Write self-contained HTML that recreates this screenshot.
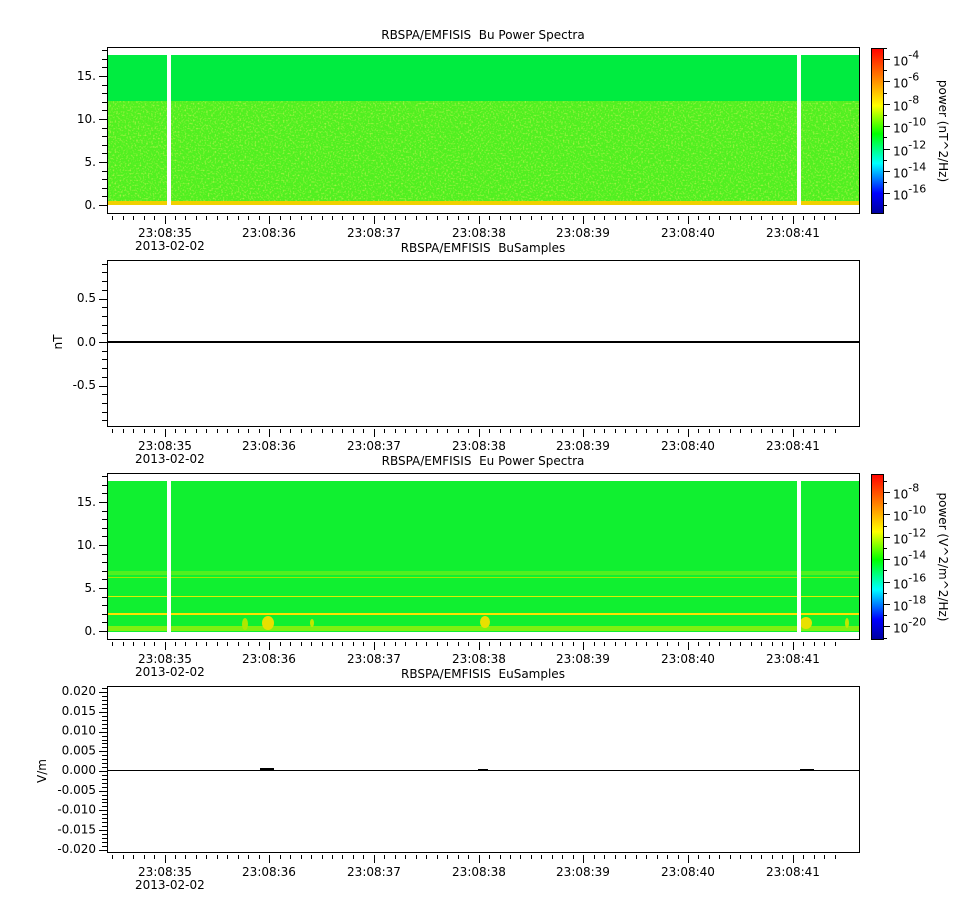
<!DOCTYPE html>
<html><head><meta charset="utf-8"><style>
html,body{margin:0;padding:0;background:#fff;}
svg{display:block;font-family:"DejaVu Sans","Liberation Sans",sans-serif;}
</style></head><body>
<svg id="s" width="967" height="900" viewBox="0 0 967 900" xmlns="http://www.w3.org/2000/svg">
<defs>
<linearGradient id="cb" x1="0" y1="1" x2="0" y2="0">
<stop offset="0" stop-color="#0000a0"/><stop offset="0.12" stop-color="#0000ff"/>
<stop offset="0.3" stop-color="#00ffff"/><stop offset="0.48" stop-color="#00ff00"/>
<stop offset="0.65" stop-color="#ffff00"/><stop offset="0.82" stop-color="#ff8000"/>
<stop offset="1" stop-color="#ff0000"/></linearGradient>
<filter id="nz" x="0" y="0" width="1" height="1">
<feTurbulence type="fractalNoise" baseFrequency="0.6" numOctaves="1" seed="3"/>
<feColorMatrix type="matrix" values="0 0 0 0 0.6  0 0 0 0 0.9  0 0 0 0 0.1  0 0 0 3 -1.5"/>
</filter>
</defs>
<rect x="108" y="55" width="752" height="47" fill="#00ec40"/>
<rect x="108" y="101" width="752" height="103" fill="#50f020"/>
<rect x="108" y="101" width="752" height="103" filter="url(#nz)" opacity="0.8"/>
<rect x="108" y="201" width="752" height="4" fill="#f0d000"/>
<rect x="167" y="55" width="4" height="151" fill="#fff"/>
<rect x="797" y="55" width="4" height="151" fill="#fff"/>
<rect x="108" y="481" width="752" height="151" fill="#10f030"/>
<rect x="108" y="571" width="752" height="4" fill="#50f020"/>
<rect x="108" y="577" width="752" height="1" fill="#a0e800"/>
<rect x="108" y="596" width="752" height="1" fill="#e0f000"/>
<rect x="108" y="613" width="752" height="2" fill="#ffe000"/>
<rect x="108" y="626" width="752" height="5" fill="#80f010"/>
<ellipse cx="268" cy="623" rx="6" ry="7" fill="#e8e000"/>
<ellipse cx="245" cy="624" rx="3" ry="6" fill="#b0e800"/>
<ellipse cx="312" cy="623" rx="2" ry="4" fill="#c0e800"/>
<ellipse cx="485" cy="622" rx="5" ry="6" fill="#e8e000"/>
<ellipse cx="806" cy="623" rx="6" ry="6" fill="#e8e000"/>
<ellipse cx="847" cy="623" rx="2" ry="5" fill="#c0e800"/>
<rect x="167" y="481" width="4" height="151" fill="#fff"/>
<rect x="797" y="481" width="4" height="151" fill="#fff"/>
<rect x="108" y="341" width="752" height="2" fill="#000"/>
<rect x="108" y="770" width="752" height="1" fill="#000"/>
<rect x="260" y="768" width="14" height="3" fill="#000"/>
<rect x="478" y="769" width="10" height="2" fill="#000"/>
<rect x="800" y="769" width="14" height="2" fill="#000"/>
<rect x="871" y="48" width="12" height="165" fill="url(#cb)"/>
<rect x="871" y="474" width="12" height="165" fill="url(#cb)"/>
<g id="g" fill="none" stroke="#000" stroke-width="1"></g>
<g id="t" font-size="12" fill="#000"></g>
</svg>
<script>
var g=document.getElementById('g'),t=document.getElementById('t');
function L(x1,y1,x2,y2){var l=document.createElementNS('http://www.w3.org/2000/svg','line');l.setAttribute('x1',x1);l.setAttribute('y1',y1);l.setAttribute('x2',x2);l.setAttribute('y2',y2);g.appendChild(l);}
function T(x,y,s,a,sz){var e=document.createElementNS('http://www.w3.org/2000/svg','text');e.setAttribute('x',x);e.setAttribute('y',y);e.setAttribute('text-anchor',a||'start');if(sz)e.setAttribute('font-size',sz);e.innerHTML=s;t.appendChild(e);return e;}
var tops=[47,260,473,686],titles=['RBSPA/EMFISIS&#160; Bu Power Spectra','RBSPA/EMFISIS&#160; BuSamples','RBSPA/EMFISIS&#160; Eu Power Spectra','RBSPA/EMFISIS&#160; EuSamples'];
var times=['23:08:35','23:08:36','23:08:37','23:08:38','23:08:39','23:08:40','23:08:41'];
var X0=164.5,DX=104.7;
tops.forEach(function(y0,i){
 var y1=y0+166;
 var r=document.createElementNS('http://www.w3.org/2000/svg','rect');r.setAttribute('x',107.5);r.setAttribute('y',y0+0.5);r.setAttribute('width',752);r.setAttribute('height',166);g.appendChild(r);
 T(483,y0-8,titles[i],'middle');
 for(var k=-6;k<=64;k++){var x=Math.round(X0+k*DX/10)+0.5;if(x<108||x>860)continue;L(x,y1+3,x,y1+(k%10==0?11:7));}
 times.forEach(function(s,j){T(Math.round(X0+j*DX),y1+24,s,'middle');});
 T(135,y1+37,'2013-02-02');
});
[[205,0],[631,2]].forEach(function(p){var z=p[0];
 for(var v=0;v<=18;v++){var y=Math.round(z-v*8.6)+0.5;if(y<tops[p[1]])continue;L(v%5==0?99:102,y,107,y);}
 ['0.','5.','10.','15.'].forEach(function(s,j){T(96,z-j*43+4,s,'end');});
});
for(var v=-9;v<=9;v++){var y=Math.round(342-v*8.7)+0.5;L(v%5==0?99:102,y,107,y);}
[['0.5',298],['0.0',342],['-0.5',385]].forEach(function(a){T(96,a[1]+4,a[0],'end');});
var e=T(0,0,'nT','middle');e.setAttribute('transform','translate(62,342) rotate(-90)');
for(var v=-21;v<=21;v++){var y=Math.round(771-v*3.93)+0.5;if(y<687||y>852)continue;L(v%5==0?99:102,y,107,y);}
['0.020','0.015','0.010','0.005','0.000','-0.005','-0.010','-0.015','-0.020'].forEach(function(s,j){T(96,691+j*19.75+4,s,'end');});
e=T(0,0,'V/m','middle');e.setAttribute('transform','translate(46,771) rotate(-90)');
[[48,-4,59,'power (nT^2/Hz)'],[474,-8,492,'power (V^2/m^2/Hz)']].forEach(function(c){
 var y0=c[0];var r=document.createElementNS('http://www.w3.org/2000/svg','rect');r.setAttribute('x',871.5);r.setAttribute('y',y0+0.5);r.setAttribute('width',12);r.setAttribute('height',165);g.appendChild(r);
 for(var k=0;k<7;k++){var y=Math.round(c[2]+k*22.4)+0.5;L(883,y,890,y);var y2=Math.round(c[2]+k*22.4+11.2)+0.5;if(y2<y0+165)L(883,y2,887,y2);var y3=Math.round(c[2]-11.2)+0.5;if(k==0&&y3>y0)L(883,y3,887,y3);
  T(893,y+6,'10<tspan font-size="11" dy="-7">'+(c[1]-2*k)+'</tspan>');}
 var e=T(0,0,c[3],'middle');e.setAttribute('transform','translate(939,'+(y0+83)+') rotate(90)');
});
</script>
</body></html>
